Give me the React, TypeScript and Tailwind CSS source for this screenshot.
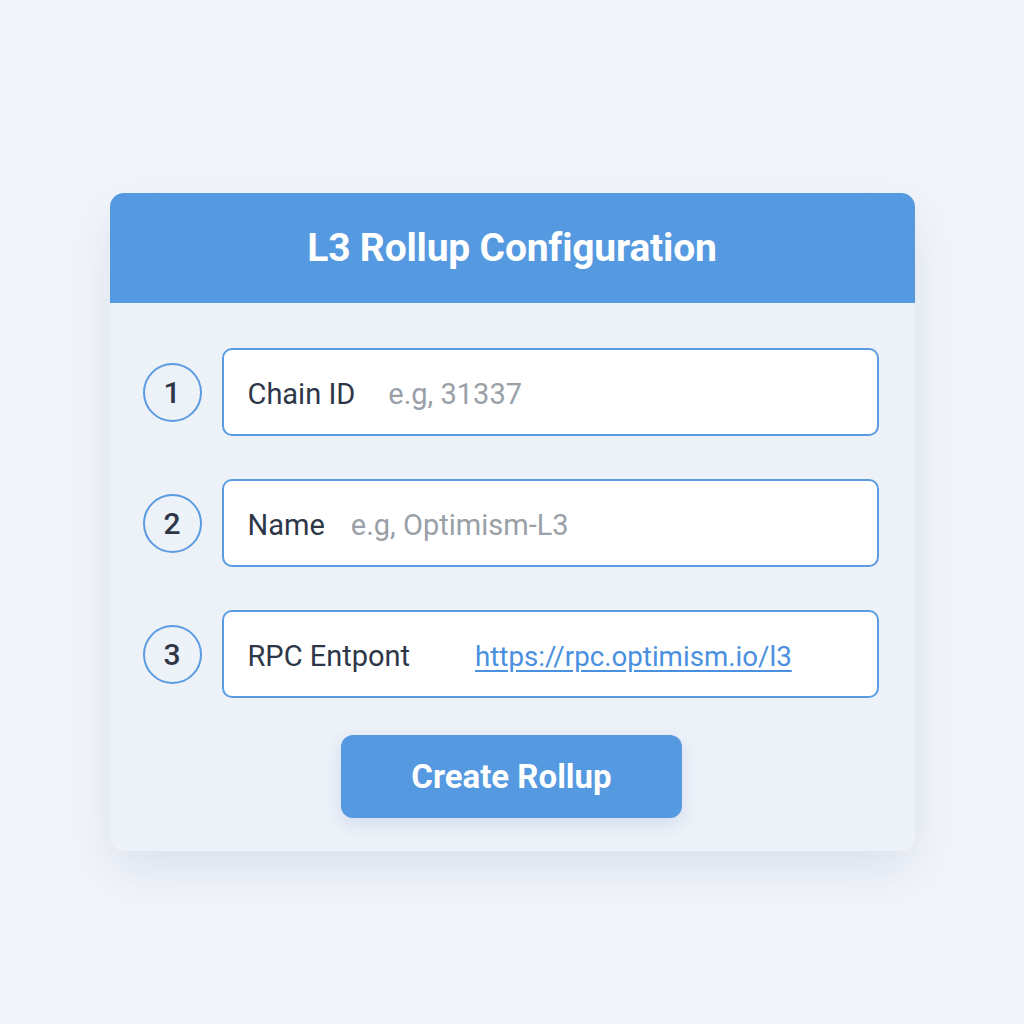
const rows = [
  { n: '1', label: 'Chain ID', value: 'e.g, 31337', gap: 'ml-[33px]', link: false },
  { n: '2', label: 'Name', value: 'e.g, Optimism-L3', gap: 'ml-[26px]', link: false },
  { n: '3', label: 'RPC Entpont', value: 'https://rpc.optimism.io/l3', gap: 'ml-[65px]', link: true },
]

const App = () => {
  return (
    <div
      className="min-h-[1024px] bg-[#f2f5fb] pt-[193px]"
      style={{ fontFamily: 'Roboto, "Liberation Sans", sans-serif' }}
    >
      <div className="mx-auto w-[805px] rounded-[14px] bg-[#edf1f8] shadow-[0_20px_50px_rgba(60,80,130,0.12)] overflow-hidden">
        <div className="h-[110px] bg-[#5599e0] flex items-center justify-center">
          <h1 className="text-white text-[39px] font-bold tracking-[-0.2px]">L3 Rollup Configuration</h1>
        </div>
        <div className="pt-[45px] pb-[33px] pl-[33px] pr-[36px] flex flex-col">
          <div className="flex flex-col gap-[43px]">
            {rows.map((r) => (
              <div key={r.n} className="flex items-center gap-[20px]">
                <div className="w-[59px] h-[59px] rounded-full border-[2.5px] border-[#5a9be2] flex items-center justify-center text-[#2d3748] text-[30px] font-medium">
                  {r.n}
                </div>
                <div className="flex-1 h-[88px] bg-white rounded-[10px] border-2 border-[#5a9be2] flex items-center pl-[24px] pt-[5px] text-[29px]">
                  <span className="text-[#2d3748]">{r.label}</span>
                  {r.link ? (
                    <span className={`${r.gap} text-[27.7px] text-[#4a90e0] underline underline-offset-[4px]`}>{r.value}</span>
                  ) : (
                    <span className={`${r.gap} text-[#9aa0a8]`}>{r.value}</span>
                  )}
                </div>
              </div>
            ))}
          </div>
          <div className="flex justify-center mt-[37px] pl-[2px]">
            <button className="w-[341px] h-[83px] rounded-[12px] bg-[#5599e0] text-white text-[33px] font-bold shadow-[0_6px_16px_rgba(60,110,180,0.15)]">
              Create Rollup
            </button>
          </div>
        </div>
      </div>
    </div>
  )
}

export default App
